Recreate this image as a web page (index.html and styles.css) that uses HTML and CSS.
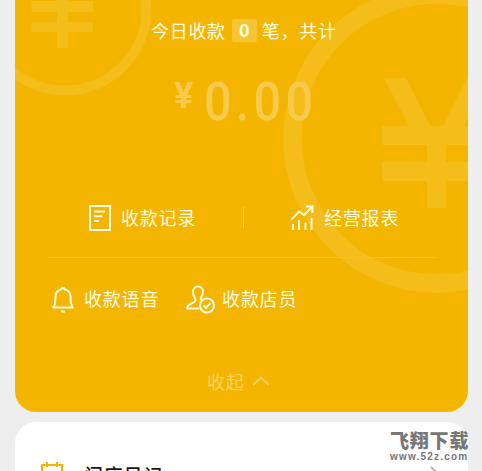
FILE: index.html
```html
<!DOCTYPE html>
<html lang="zh-CN">
<head>
<meta charset="utf-8">
<title>收款</title>
<link rel="stylesheet" href="styles.css">
</head>
<body>
<main class="page">
  <section class="card">
    <svg class="coins" width="453" height="412" viewBox="15 0 453 412" aria-hidden="true">
      <circle cx="65" cy="9" r="81.500" stroke-width="10"/>
      <path class="solid" d="M31.500 1H57V-20H68V1H93V12H68V22H93V32H68V48H57V32H31.500V22H57V12H31.500Z"/>
      <circle cx="437" cy="139" r="144.500" stroke-width="18.500"/>
      <path class="solid" d="M384 78H406L430 126H443L467 78H489L464 126H491V145H446V162H491V181H446V208H427V181H382V162H427V145H382V126H409Z"/>
    </svg>
    <p class="summary"><span>今日收款</span><b class="count">0</b><span>笔，共计</span></p>
    <div class="amount"><span class="yen">¥</span><span class="value">0.00</span></div>
    <div class="row row-main">
      <a class="item records">
        <svg width="24" height="28" viewBox="0 0 24 28"><path d="M2 2H22V26H2ZM6 7.500H17M6 12.300H14.500M6 17H11"/></svg>
        <span>收款记录</span>
      </a>
      <i class="divider"></i>
      <a class="item report">
        <svg width="25" height="28" viewBox="0 0 25 28"><path d="M1.500 15.500L9 7.500L14 11L22 3M16 2.500H22.500V9M3 20V26M9 16V26M15.500 18.500V26M21.500 14V26"/></svg>
        <span>经营报表</span>
      </a>
    </div>
    <div class="row row-more">
      <a class="item voice">
        <svg width="24" height="28" viewBox="0 0 24 28"><path stroke-linejoin="round" d="M2.200 22.500C4.500 19.500 4.500 17 4.500 12C4.500 7.500 7 5 10.500 4.200C10.500 2.300 13.500 2.300 13.500 4.200C17 5 19.500 7.500 19.500 12C19.500 17 19.500 19.500 21.800 22.500ZM10 26.500H14"/></svg>
        <span>收款语音</span>
      </a>
      <a class="item clerk">
        <svg width="31" height="30" viewBox="0 0 31 30"><path stroke-linejoin="round" d="M14 24.500H2C2 19.500 9.500 19.500 10.500 16.500C11 14.500 8 12.500 8 8C8 4.800 10 2.500 13 2.500C16 2.500 18 5 18 8C18 11.500 15.500 12.500 15.500 16"/><circle cx="22" cy="21.500" r="7"/><path d="M18.500 21.500L21 24L25.500 19"/></svg>
        <span>收款店员</span>
      </a>
    </div>
    <div class="collapse"><span>收起</span><svg width="18" height="12" viewBox="0 0 18 12"><path d="M1 10L9 2.500L17 10"/></svg></div>
  </section>
  <section class="diary">
    <svg width="24" height="28" viewBox="0 0 24 28"><path d="M2 4H22V26H2ZM7 1V6M17 1V6M6 11.500H18"/></svg>
    <span class="diary-title">门店日记</span>
    <svg class="arrow" width="10" height="18" viewBox="0 0 10 18"><path d="M1 1L9 9L1 17"/></svg>
  </section>
  <div class="watermark"><strong>飞翔下载</strong><span>www.52z.com</span></div>
</main>
</body>
</html>
```
FILE: styles.css
```css
* { box-sizing: border-box; }
body {
  margin: 0;
  height: 471px;
  overflow: hidden;
  background: #eee;
  font-family: "Noto Sans CJK SC", sans-serif;
}
.page {
  position: relative;
  height: 471px;
  padding: 0 14px 0 15px;
  overflow: hidden;
}
svg {
  display: block;
  flex: none;
  fill: none;
  stroke: currentColor;
  stroke-width: 2;
}
.card {
  position: relative;
  height: 412px;
  padding-top: 18px;
  overflow: hidden;
  border-radius: 0 0 21px 21px;
  background: #f3b500;
  color: #fffbe0;
}
.card > * { position: relative; }
.card > .coins {
  position: absolute;
  inset: 0;
  stroke: #f5bd1a;
}
.coins .solid { fill: #f5bd1a; stroke: none; }
.summary {
  display: flex;
  align-items: center;
  height: 25px;
  margin: 0 0 0 136px;
  font-size: 18px;
  letter-spacing: .7px;
  line-height: 25px;
}
.count {
  width: 25px;
  height: 23px;
  margin: 0 5px 0 6px;
  border-radius: 2px;
  background: #f6c535;
  font: bold 19px/24px "Liberation Sans", sans-serif;
  letter-spacing: 0;
  text-align: center;
}
.amount {
  display: flex;
  height: 60px;
  margin: 28px 0 0 159px;
  color: #f7ca4b;
  font-family: Roboto, sans-serif;
}
.yen {
  width: 30px;
  font-size: 36px;
  font-weight: 700;
  line-height: 51px;
}
.value {
  font-size: 54px;
  font-weight: 500;
  letter-spacing: 4.700px;
  line-height: 61px;
  transform: scaleX(.9);
  transform-origin: 0 50%;
}
.row { display: flex; align-items: center; }
.item {
  display: flex;
  align-items: center;
  font-size: 18px;
  letter-spacing: .8px;
  line-height: 28px;
  white-space: nowrap;
}
.item span { margin-top: -2px; }
.row-main {
  height: 80px;
  margin: 47px 31px 0 33px;
  border-bottom: 1px solid #f5c02b;
}
.records { width: 195px; padding-left: 40px; gap: 9px; }
.divider { width: 1px; height: 21px; background: #f8ce53; }
.report { margin-left: 46px; gap: 9px; }
.row-more { height: 82px; padding-left: 36px; }
.voice { width: 134px; gap: 9px; }
.clerk { gap: 6px; }
.collapse {
  display: flex;
  align-items: center;
  height: 28px;
  margin: 27px 0 0 192px;
  gap: 7px;
  color: #f8d061;
  font-size: 18px;
  letter-spacing: .8px;
}
.diary {
  display: flex;
  height: 100px;
  margin-top: 10px;
  padding: 39px 28px 0 25px;
  border-radius: 21px;
  background: #fff;
  color: #f3b500;
}
.diary-title {
  margin-left: 20px;
  color: #181818;
  font-size: 19px;
  font-weight: 500;
  letter-spacing: .8px;
  line-height: 28px;
}
.arrow { margin: 5px 0 0 auto; color: #b4b4b4; }
.watermark {
  position: absolute;
  top: 430px;
  left: 390px;
  display: flex;
  flex-direction: column;
  color: #777;
}
.watermark strong {
  height: 20px;
  font-size: 19px;
  font-weight: 900;
  letter-spacing: .8px;
  line-height: 20px;
  white-space: nowrap;
}
.watermark span {
  font: bold 10px/14px "Liberation Sans", sans-serif;
  letter-spacing: 1.200px;
}
```
